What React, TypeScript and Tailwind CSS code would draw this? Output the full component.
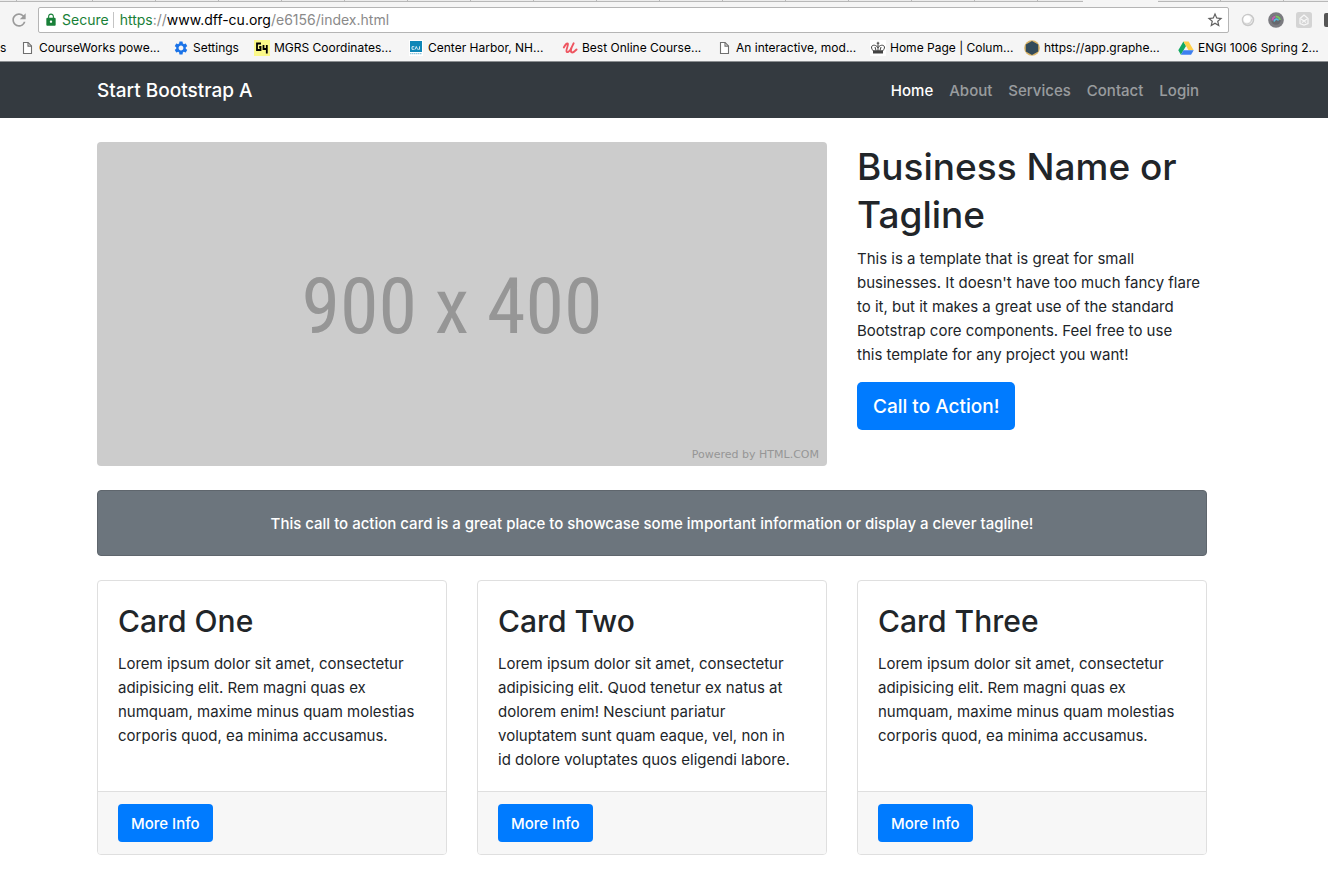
import type { ReactNode } from "react";
import { MdLock, MdRefresh, MdSettings, MdStarBorder } from "react-icons/md";

function PageIcon() {
  return (
    <svg viewBox="0 0 16 16" className="size-4" fill="#fff" stroke="#6f6f6f" strokeWidth="1.1">
      <path d="M4.5 2.5h4.6l3.4 3.4v7.6h-8z" />
      <path d="M9 2.7v3.4h3.4" fill="none" />
    </svg>
  );
}

function GridSquareIcon() {
  return (
    <svg viewBox="0 0 16 16" className="size-4">
      <rect width="16" height="16" fill="#fbf98a" />
      <path
        d="M7 3.500H3v6.500h3.500V7H5.200M9.500 5v4h3.400M12.800 5v8.500"
        fill="none"
        stroke="#000"
        strokeWidth="1.800"
      />
    </svg>
  );
}

function CajIcon() {
  return (
    <svg viewBox="0 0 16 16" className="size-4">
      <rect x="1" width="14" height="16" fill="#fff" />
      <rect x="2" y="1" width="12" height="11" fill="#0e86b7" />
      <path d="M2 13.6h12" stroke="#8fc6dd" strokeWidth="1.4" strokeDasharray="1.5 .5" />
      <path
        d="M6.3 6.7H4v2.6h2.3M7 9.5l1.3-3 1.3 3M11.5 6.3v3h-1.3"
        fill="none"
        stroke="#fff"
        strokeWidth=".8"
      />
    </svg>
  );
}

function ScriptUIcon() {
  return (
    <svg viewBox="0 0 16 16" className="size-4" fill="none" stroke="#ee5560" strokeLinecap="round">
      <path d="M1.800 7.500C3 5.200 5 3.200 5.800 3.600c1.100.7-1.800 5.600-1.300 7.800.5 1.700 3.200.2 4.700-3.100" strokeWidth="1.800" />
      <path d="M11.600 3.400c-1.500 2.800-3.400 7.700-2.100 8.800 1 .6 3.200-.8 5-2.700" strokeWidth="2" />
    </svg>
  );
}

function CrownIcon() {
  return (
    <svg viewBox="0 0 16 16" className="size-4">
      <rect width="16" height="16" fill="#fff" />
      <g fill="none" stroke="#444" strokeWidth="1">
        <path d="M8 1.800v4M6.700 3.200h2.600" />
        <path d="M3.500 11C1.500 9 .8 7 2.200 5.800 4 4.500 7 5.500 8 8c1-2.500 4-3.500 5.800-2.200C15.200 7 14.500 9 12.500 11z" />
        <path d="M8 5.500V11M5 7l1 3.500M11 7l-1 3.500" />
      </g>
      <path d="M3 10.500h10v3H3z" fill="#444" />
    </svg>
  );
}

function HexIcon() {
  return (
    <svg viewBox="0 0 16 16" className="size-4">
      <circle cx="8" cy="8" r="7.800" fill="#d9b366" />
      <path d="M8 .9l6.200 3.500v7.200L8 15.100l-6.200-3.500V4.400z" fill="#334b5a" />
    </svg>
  );
}

function DriveIcon() {
  return (
    <svg viewBox="0 0 16 16" className="size-4">
      <path d="M5.400 1.500L.3 10.300l2.600 4.400L8 5.900z" fill="#11a861" />
      <path d="M5.400 1.500h5.200l5.100 8.800h-5.200z" fill="#ffcf48" />
      <path d="M5.500 10.300h10.200l-2.600 4.400H2.900z" fill="#3d7ff0" />
    </svg>
  );
}

type Bookmark = { title: string; icon: ReactNode; width?: string };

const bookmarks: Bookmark[] = [
  { title: "CourseWorks powe...", icon: <PageIcon /> },
  { title: "Settings", icon: <MdSettings className="size-4 text-[#1a73e8]" />, width: "w-[81px]" },
  { title: "MGRS Coordinates...", icon: <GridSquareIcon /> },
  { title: "Center Harbor, NH...", icon: <CajIcon /> },
  { title: "Best Online Course...", icon: <ScriptUIcon /> },
  { title: "An interactive, mod...", icon: <PageIcon /> },
  { title: "Home Page | Colum...", icon: <CrownIcon /> },
  { title: "https://app.graphe...", icon: <HexIcon /> },
  { title: "ENGI 1006 Spring 2...", icon: <DriveIcon /> },
];

function TabStrip() {
  return (
    <div className="flex h-0.5 bg-[#ececec]">
      <div className="w-[17px] border-r border-b border-[#b8b8b8]" />
      <div className="w-[76px] border-r border-b border-[#b8b8b8]" />
      {Array.from({ length: 15 }, (_, i) => (
        <div key={i} className="w-[63px] border-r border-b border-[#b8b8b8]" />
      ))}
      <div className="w-[45px] border-b border-[#b8b8b8]" />
      <div className="w-[75px] bg-[#f5f5f5]" />
      <div className="w-[63px] border-r border-b border-[#b8b8b8]" />
      <div className="w-[63px] border-r border-b border-[#b8b8b8]" />
      <div className="flex-1 border-b border-[#b8b8b8]" />
    </div>
  );
}

function BrowserBar() {
  return (
    <div className="overflow-hidden border-b border-[#8b8e91] bg-[#f5f5f5]">
      <TabStrip />
      <div className="flex h-8 items-center pt-1">
        <button aria-label="Reload" className="flex w-[38px] justify-center text-[#9b9b9b]">
          <MdRefresh className="size-5" />
        </button>
        <div className="flex h-[26px] min-w-0 flex-1 items-center rounded-xs border border-[#b5b5b5] bg-white pr-1 pl-[5px] text-sm">
          <MdLock className="size-3.5 text-[#188038]" />
          <span className="ml-1 text-[#188038]">Secure</span>
          <span className="mr-1.5 ml-1 h-4 w-px bg-[#c4c4c4]" />
          <div role="textbox" aria-label="Address" className="flex-1 truncate text-[#8a8a8a]">
            <span className="text-[#188038]">https</span>://
            <span className="text-black">www.dff-cu.org</span>/e6156/index.html
          </div>
          <button aria-label="Bookmark this page">
            <MdStarBorder className="size-[18px] text-[#606060]" />
          </button>
        </div>
        <div className="flex w-[99px] shrink-0 items-center gap-3 overflow-hidden pl-[11px]">
          <button aria-label="Sphere extension" className="shrink-0">
            <svg viewBox="0 0 16 16" className="size-4">
              <circle cx="8" cy="8" r="5.500" fill="#f2f2f2" stroke="#c8c8c8" strokeWidth="1.500" />
              <circle cx="7" cy="7" r="3.500" fill="#fff" />
              <path d="M4 11c3 2 7 1 8-4" fill="none" stroke="#d0d0d0" strokeWidth="1.200" />
            </svg>
          </button>
          <button aria-label="Color wheel extension" className="shrink-0">
            <svg viewBox="0 0 16 16" className="size-4">
              <circle cx="8" cy="8" r="7.800" fill="#7b7b80" />
              <circle cx="8" cy="8" r="4.800" fill="#66676d" />
              <path d="M4.500 8.500a4 4 0 0 1 3-4" stroke="#c05fae" strokeWidth="2" fill="none" />
              <path d="M7.500 4.500a4 4 0 0 1 4.500 3.500" stroke="#79c464" strokeWidth="2" fill="none" />
              <path d="M6 9.500c1-3 3.500-3 4.500-1" stroke="#58bfe0" strokeWidth="1.600" fill="none" />
            </svg>
          </button>
          <button aria-label="Lock extension" className="shrink-0">
            <svg viewBox="0 0 16 16" className="size-4">
              <rect width="16" height="16" rx="2.500" fill="#d4d4d4" />
              <path d="M4 6.500L8 3l4 3.500v5L8 13l-4-1.500zM5 7l3 2 3-2M6 10.500l2-1.500 2 1.500" fill="none" stroke="#f7f7f7" strokeWidth="1.200" />
            </svg>
          </button>
          <button aria-label="More extensions" className="h-3.5 w-4 shrink-0 rounded-l-xs bg-[#555]" />
        </div>
      </div>
      <nav aria-label="Bookmarks" className="flex h-[27px] items-center text-xs whitespace-nowrap text-black">
        <a href="#" className="w-[19px] shrink-0">s</a>
        {bookmarks.map((b) => (
          <a key={b.title} href="#" className={`flex shrink-0 items-center gap-1 ${b.width ?? "w-[154px]"}`}>
            {b.icon}
            {b.title}
          </a>
        ))}
      </nav>
    </div>
  );
}

function SiteNav() {
  return (
    <header className="bg-[#343a40] pr-6">
      <div className="mx-auto flex h-14 max-w-[1140px] items-center justify-between px-[15px] pt-0.5">
        <a href="#" className="text-[19px] font-medium text-white">Start Bootstrap A</a>
        <nav aria-label="Main" className="flex font-medium text-white/50">
          <a href="#" className="px-2 text-white">Home</a>
          <a href="#" className="px-2">About</a>
          <a href="#" className="px-2">Services</a>
          <a href="#" className="px-2">Contact</a>
          <a href="#" className="px-2">Login</a>
        </nav>
      </div>
    </header>
  );
}

const intro =
  "This is a template that is great for small businesses. It doesn't have too much fancy flare to it, but it makes a great use of the standard Bootstrap core components. Feel free to use this\u00a0template for any project you want!";

const cards = [
  {
    title: "Card One",
    text: "Lorem ipsum dolor sit amet, consectetur adipisicing elit. Rem magni quas ex numquam, maxime minus quam molestias corporis quod, ea minima accusamus.",
  },
  {
    title: "Card Two",
    text: "Lorem ipsum dolor sit amet, consectetur adipisicing elit. Quod tenetur ex natus at dolorem enim! Nesciunt pariatur voluptatem sunt quam eaque, vel, non in id\u00a0dolore voluptates quos eligendi labore.",
  },
  {
    title: "Card Three",
    text: "Lorem ipsum dolor sit amet, consectetur adipisicing elit. Rem magni quas ex numquam, maxime minus quam molestias corporis quod, ea minima accusamus.",
  },
];

export default function App() {
  return (
    <div className="min-h-screen bg-white font-['Inter',sans-serif] text-[15px] text-[#212529]">
      <BrowserBar />
      <SiteNav />
      <main className="py-6 pr-6">
        <div className="mx-auto flex max-w-[1140px] flex-col gap-6 px-[15px]">
          <section className="grid grid-cols-12 gap-x-[30px]">
            <div
              role="img"
              aria-label="Placeholder image, 900 by 400"
              className="col-span-8 grid h-[324px] grid-rows-[1fr_auto] rounded bg-[#ccc] text-[#969696]"
            >
              <div className="flex items-center justify-center pt-6 pr-5 font-['Roboto_Condensed','Liberation_Sans',sans-serif] text-[78px] leading-none">
                900 x 400
              </div>
              <div className="pr-2 pb-[3px] text-right font-['DejaVu_Sans',sans-serif] text-[11px] leading-4">
                Powered by HTML.COM
              </div>
            </div>
            <div className="col-span-4 pt-px">
              <h1 className="mb-2 text-[37px] leading-[48px] font-medium">Business Name or Tagline</h1>
              <p className="mb-[15px] leading-6">{intro}</p>
              <button className="h-12 rounded-[5px] bg-[#007bff] px-4 pt-0.5 text-[19px] font-medium text-white">
                Call to Action!
              </button>
            </div>
          </section>

          <section className="rounded border border-[#5f666d] bg-[#6c757d] px-5 pt-[21px] pb-[19px] text-center leading-6 font-medium text-white">
            <p>This call to action card is a great place to showcase some important information or display a clever tagline!</p>
          </section>

          <section className="grid grid-cols-3 gap-[30px]">
            {cards.map((card) => (
              <article key={card.title} className="flex flex-col overflow-hidden rounded border border-[#dfdfdf]">
                <div className="flex-1 px-5 pt-[21px] pb-[19px]">
                  <h2 className="mb-3 text-[30px] leading-[38px] font-medium">{card.title}</h2>
                  <p className="leading-6">{card.text}</p>
                </div>
                <div className="border-t border-[#dfdfdf] bg-[#f7f7f7] px-5 py-3">
                  <button className="h-[38px] rounded bg-[#007bff] px-[13px] pt-0.5 font-medium text-white">More Info</button>
                </div>
              </article>
            ))}
          </section>
        </div>
      </main>
    </div>
  );
}
